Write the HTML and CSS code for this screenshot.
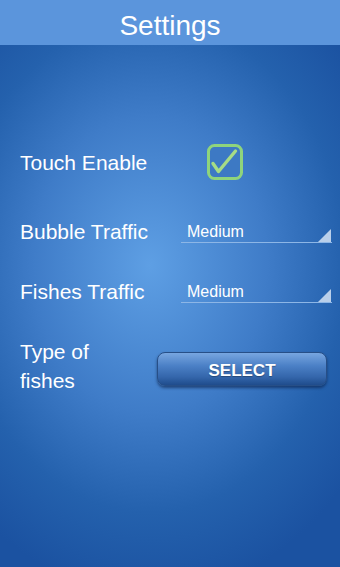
FILE: index.html
```html
<!DOCTYPE html>
<html lang="en">
	<head>
		<meta charset="utf-8">
		<meta name="viewport" content="width=device-width, initial-scale=1">
		<title>Settings</title>
		<link rel="stylesheet" href="styles.css">
	</head>
	<body>
		<div class="header">Settings</div>
		<div class="content">
			<div class="row row-touch">
				<div class="label">Touch Enable</div>
				<div class="control">
					<svg class="check" width="38" height="38" viewBox="0 0 38 38">
						<rect x="2.5" y="2.5" width="33" height="33" rx="6" ry="6" fill="#3d79c4" stroke="#8fd47c" stroke-width="3"/>
						<path d="M7 20.5 L12.5 28.5 L29.5 8" fill="none" stroke="#a6dc86" stroke-width="3.4" stroke-linecap="round" stroke-linejoin="round"/>
					</svg>
				</div>
			</div>
			<div class="row row-bubble">
				<div class="label">Bubble Traffic</div>
				<div class="control">
					<div class="spinner">Medium<span class="corner"></span></div>
				</div>
			</div>
			<div class="row row-fishes">
				<div class="label">Fishes Traffic</div>
				<div class="control">
					<div class="spinner">Medium<span class="corner"></span></div>
				</div>
			</div>
			<div class="row row-type">
				<div class="label">Type of<br>fishes</div>
				<div class="control">
					<div class="butt">SELECT</div>
				</div>
			</div>
		</div>
	</body>
</html>
```

FILE: styles.css
```css
html, body {
	height: 100%;
}

body {
	margin: 0;
	font-family: "Liberation Sans", Arial, sans-serif;
	color: #FFFFFF;
	background: radial-gradient(ellipse 260px 330px at 150px 265px, #5e9fe4 0%, #3f7cc8 45%, #2461ad 75%, #1b52a1 100%);
	background-color: #1b52a1;
	overflow: hidden;
}

.header {
	height: 45px;
	line-height: 52px;
	background-color: #5b95dc;
	text-align: center;
	font-size: 28px;
}

.content {
	padding-left: 20px;
}

.row {
	display: flex;
	align-items: center;
	height: 40px;
}

.row-touch {
	margin-top: 97px;
}

.row-bubble {
	margin-top: 29px;
}

.row-fishes {
	margin-top: 20px;
}

.row-type {
	margin-top: 20px;
	height: 70px;
}

.label {
	width: 161px;
	font-size: 21px;
	line-height: 29px;
	flex-shrink: 0;
}

.row-touch .label {
	width: 186px;
}

.row-type .label {
	width: 137px;
}

.control {
	display: flex;
	align-items: center;
}

.check {
	display: block;
}

.spinner {
	position: relative;
	width: 151px;
	height: 19px;
	padding-left: 6px;
	box-sizing: border-box;
	font-size: 16px;
	line-height: 16px;
	border-bottom: 1px solid #8db6e6;
	margin-top: 4px;
}

.corner {
	position: absolute;
	right: 1px;
	bottom: 0;
	width: 0;
	height: 0;
	border-left: 13px solid transparent;
	border-bottom: 13px solid #b9cfea;
}

.butt {
	width: 170px;
	height: 34px;
	line-height: 35px;
	text-align: center;
	font-size: 17px;
	font-weight: bold;
	border-radius: 8px;
	border: 1px solid #274f87;
	box-sizing: border-box;
	background: linear-gradient(to bottom, #78a6e0 0%, #4b80c6 40%, #3466ab 75%, #1f4c8c 100%);
	box-shadow: 0 2px 3px rgba(10, 30, 70, 0.6);
	text-shadow: 0 1px 1px rgba(0, 0, 0, 0.3);
	margin-top: 6px;
}
```
